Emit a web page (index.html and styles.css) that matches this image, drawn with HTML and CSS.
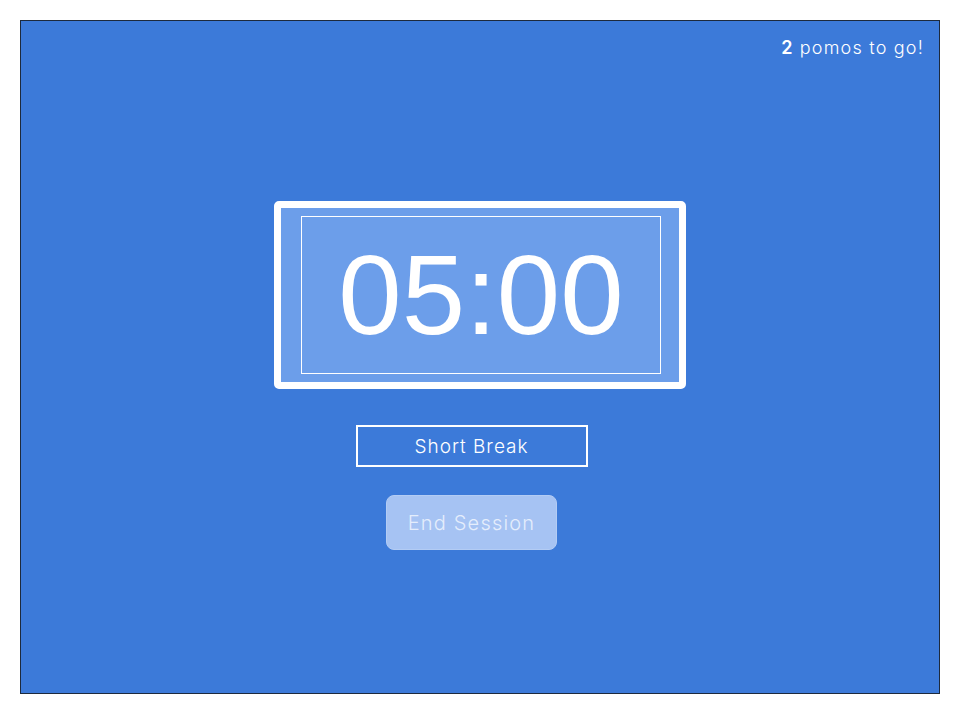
FILE: index.html
```html
<!DOCTYPE html>
<html lang="en">
<head>
<meta charset="utf-8">
<title>Pomodoro</title>
<link rel="stylesheet" href="styles.css">
</head>
<body>
<main class="panel">
  <header class="status"><strong>2</strong> pomos to go!</header>
  <section class="timer">
    <div class="timer-inner"><span class="time">05:00</span></div>
  </section>
  <div class="controls">
    <div class="mode">Short Break</div>
    <button class="end">End Session</button>
  </div>
</main>
</body>
</html>
```
FILE: styles.css
```css
html, body {
  margin: 0;
  padding: 0;
  background: #ffffff;
}
body {
  padding: 20px 19px 0 20px;
  font-family: "Inter", "Noto Sans", sans-serif;
}
.panel {
  box-sizing: border-box;
  width: 920px;
  height: 674px;
  background: #3c7ad9;
  border: 1px solid #1d2a3d;
  display: flex;
  flex-direction: column;
  align-items: center;
}
.status {
  align-self: stretch;
  text-align: right;
  color: #ffffff;
  font-size: 18px;
  font-weight: 300;
  letter-spacing: 1.2px;
  line-height: 24px;
  padding: 15px 15px 0 0;
  height: 24px;
}
.status strong {
  font-weight: 600;
}
.timer {
  box-sizing: border-box;
  margin-top: 141px;
  width: 412px;
  height: 188px;
  border: 7px solid #ffffff;
  border-radius: 5px;
  background: #6c9eea;
  padding: 8px 18px 7px 20px;
}
.timer-inner {
  box-sizing: border-box;
  height: 158px;
  border: 1px solid #ffffff;
  display: flex;
  align-items: center;
  justify-content: center;
}
.time {
  font-family: "Liberation Sans", Arial, sans-serif;
  color: #ffffff;
  font-size: 114px;
  line-height: 1;
}
.controls {
  display: flex;
  flex-direction: column;
  align-items: center;
  padding-right: 17px;
  margin-top: 36px;
}
.mode {
  box-sizing: border-box;
  width: 232px;
  height: 42px;
  border: 2px solid #ffffff;
  color: #ffffff;
  font-size: 19px;
  font-weight: 300;
  letter-spacing: 1px;
  display: flex;
  align-items: center;
  justify-content: center;
}
.end {
  box-sizing: border-box;
  margin-top: 28px;
  width: 171px;
  height: 55px;
  border: 1px solid #b3ccf4;
  border-radius: 8px;
  background: #a6c3f3;
  color: #e4edfc;
  font-family: "Inter", "Noto Sans", sans-serif;
  font-size: 20px;
  font-weight: 300;
  letter-spacing: 1.2px;
  padding: 0;
}
```
